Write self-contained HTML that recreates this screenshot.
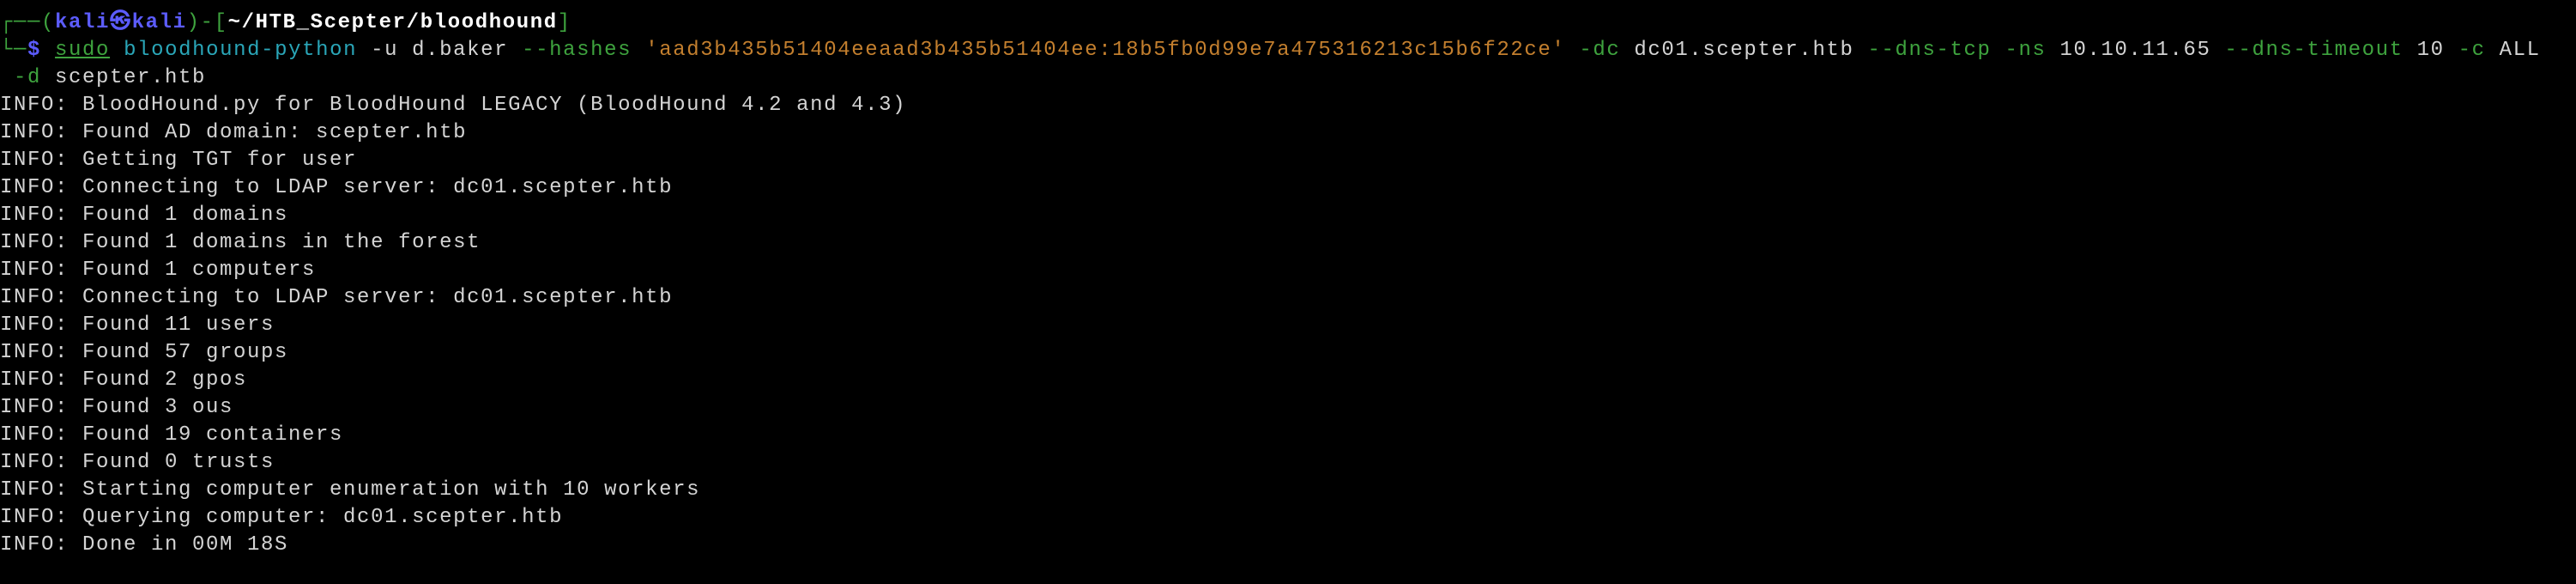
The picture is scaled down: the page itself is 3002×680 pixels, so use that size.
<!DOCTYPE html>
<html><head><meta charset="utf-8"><style>
html,body{margin:0;padding:0;background:#000;width:3002px;height:680px;overflow:hidden}
pre{margin:0;padding:11px 0 0 0;font-family:"Liberation Mono","DejaVu Sans Mono",monospace;font-size:24px;letter-spacing:1.6px;line-height:32px;color:#d4d4d4;white-space:pre}
.g{color:#3ea33e}.b{color:#5c5cff;font-weight:bold}.w{color:#ffffff;font-weight:bold}
.u{color:#3ea33e;text-decoration:underline}.t{color:#2aa6b8}.o{color:#c37f2e}.gr{color:#3ea33e}
</style></head><body><pre><span class="g">┌──(</span><span class="b">kali㉿kali</span><span class="g">)-[</span><span class="w">~/HTB_Scepter/bloodhound</span><span class="g">]</span>
<span class="g">└─</span><span class="b">$</span> <span class="u">sudo</span> <span class="t">bloodhound-python</span> -u d.baker <span class="gr">--hashes</span> <span class="o">'aad3b435b51404eeaad3b435b51404ee:18b5fb0d99e7a475316213c15b6f22ce'</span> <span class="gr">-dc</span> dc01.scepter.htb <span class="gr">--dns-tcp</span> <span class="gr">-ns</span> 10.10.11.65 <span class="gr">--dns-timeout</span> 10 <span class="gr">-c</span> ALL
 <span class="gr">-d</span> scepter.htb
INFO: BloodHound.py for BloodHound LEGACY (BloodHound 4.2 and 4.3)
INFO: Found AD domain: scepter.htb
INFO: Getting TGT for user
INFO: Connecting to LDAP server: dc01.scepter.htb
INFO: Found 1 domains
INFO: Found 1 domains in the forest
INFO: Found 1 computers
INFO: Connecting to LDAP server: dc01.scepter.htb
INFO: Found 11 users
INFO: Found 57 groups
INFO: Found 2 gpos
INFO: Found 3 ous
INFO: Found 19 containers
INFO: Found 0 trusts
INFO: Starting computer enumeration with 10 workers
INFO: Querying computer: dc01.scepter.htb
INFO: Done in 00M 18S</pre></body></html>
